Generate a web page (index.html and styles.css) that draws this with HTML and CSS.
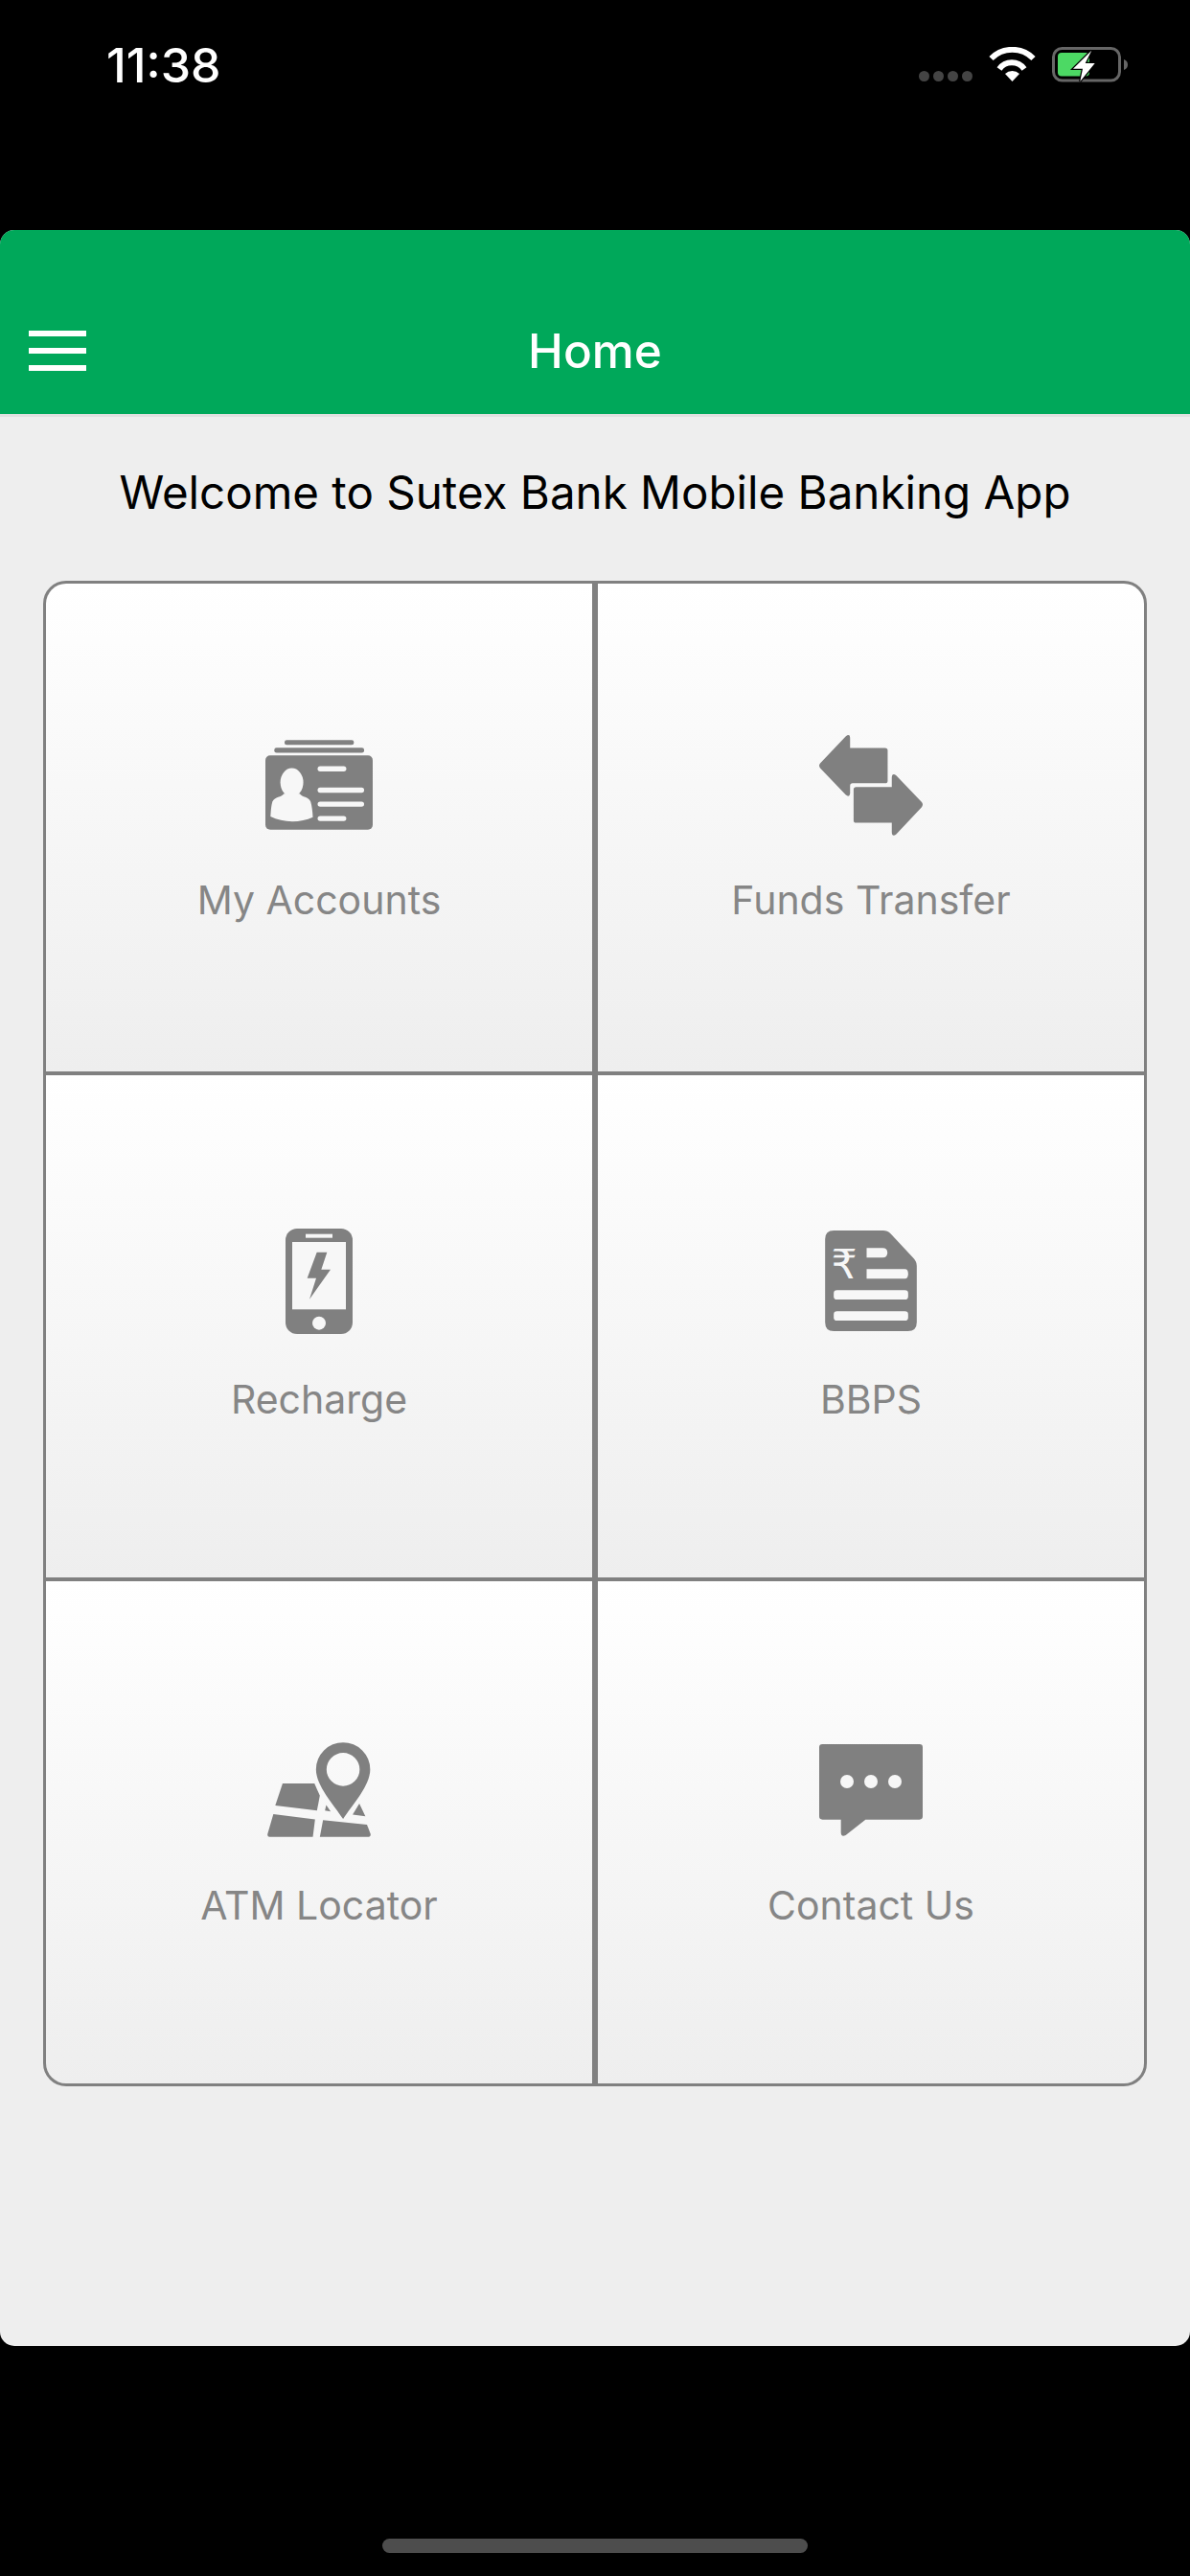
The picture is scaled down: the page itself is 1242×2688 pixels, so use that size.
FILE: index.html
```html
<!DOCTYPE html>
<html>
<head>
    <meta name="viewport" content="width=device-width, initial-scale=1">
    <title>Home</title>
    <link rel="stylesheet" href="styles.css">
</head>
<body>
    <div id="statusBar">
        <span class="time">11:38</span>
        <div class="status-icons">
            <div class="signal"><i></i><i></i><i></i><i></i></div>
            <svg class="wifi" viewBox="0 0 49 36">
                <path d="M2.5 12 A31 31 0 0 1 46.5 12" fill="none" stroke="#fff" stroke-width="6"/>
                <path d="M11 23 A16 16 0 0 1 37 23" fill="none" stroke="#fff" stroke-width="6"/>
                <path d="M24.5 36 L17 28 A11 11 0 0 1 32 28 Z" fill="#fff"/>
            </svg>
            <svg class="battery" viewBox="0 0 79 37">
                <rect x="1.5" y="1.5" width="69" height="33.5" rx="9" fill="none" stroke="#666" stroke-width="3"/>
                <rect x="6" y="6" width="33" height="24.5" rx="4" fill="#4cd964"/>
                <path d="M75 13 C78 14 79 16 79 18.5 C79 21 78 23 75 24 Z" fill="#666"/>
                <path d="M41.3 3.7 L22 22.7 H32 L29.3 36 L44.7 17 H34.7 Z" fill="#fff" stroke="#000" stroke-width="2.5" paint-order="stroke"/>
            </svg>
        </div>
    </div>

    <div id="app">
        <div class="header">
            <div class="menu-btn"><span></span><span></span><span></span></div>
            <h1>Home</h1>
        </div>

        <p class="welcome">Welcome to Sutex Bank Mobile Banking App</p>

        <div class="menu-grid">
            <div class="tile">
                <div class="tile-icon">
                    <svg class="ic-accounts" viewBox="110 92 337 281">
                        <rect x="170" y="92" width="218" height="15" rx="7" fill="#808080"/>
                        <rect x="138" y="116" width="282" height="16" rx="7" fill="#808080"/>
                        <rect x="110" y="140" width="337" height="233" rx="15" fill="#808080"/>
                        <g fill="#f7f7f7">
                            <ellipse cx="193" cy="225" rx="36" ry="45"/>
                            <path d="M168 260 C160 272 140 268 132 285 C128 298 127 315 126 332 C165 352 220 352 259 334 C258 315 256 298 252 285 C245 268 226 272 218 260 Z"/>
                            <rect x="274" y="174" width="90" height="16" rx="8"/>
                            <rect x="274" y="241" width="146" height="16" rx="8"/>
                            <rect x="274" y="285" width="146" height="16" rx="8"/>
                            <rect x="274" y="330" width="90" height="16" rx="8"/>
                        </g>
                    </svg>
                </div>
                <span class="tile-label">My Accounts</span>
            </div>
            <div class="tile">
                <div class="tile-icon">
                    <svg class="ic-transfer" viewBox="105 75 325 315">
                        <path fill="#808080" d="M108 163 L188 79 Q202 68 202 85 L202 115 L312 115 Q320 115 320 123 L320 218 Q320 226 312 226 L210 226 Q202 226 202 234 L202 258 Q200 272 188 262 L108 178 Q102 170 108 163 Z"/>
                        <path fill="#808080" d="M427 285 L347 202 Q334 192 333 208 L333 238 L221 238 Q213 238 213 246 L213 342 Q213 350 221 350 L333 350 L333 380 Q334 396 347 386 L427 301 Q433 293 427 285 Z"/>
                    </svg>
                </div>
                <span class="tile-label">Funds Transfer</span>
            </div>
            <div class="tile row-two">
                <div class="tile-icon">
                    <svg class="ic-recharge" viewBox="114 63 210 330">
                        <rect x="114" y="63" width="210" height="330" rx="36" fill="#808080"/>
                        <rect x="135" y="105" width="168" height="211" fill="#f7f7f7"/>
                        <rect x="177" y="80" width="84" height="12" fill="#f7f7f7"/>
                        <circle cx="219" cy="359" r="21" fill="#f7f7f7"/>
                        <path d="M212 137 H244 L226 191 H255 L189 284 L210 218 H182 Z" fill="#808080"/>
                    </svg>
                </div>
                <span class="tile-label">Recharge</span>
            </div>
            <div class="tile row-two">
                <div class="tile-icon">
                    <svg class="ic-bbps" viewBox="63 75 287 315">
                        <path fill="#808080" d="M90 75 H245 Q258 75 268 85 L338 160 Q350 172 350 185 V362 Q350 390 322 390 H90 Q63 390 63 362 V102 Q63 75 90 75 Z"/>
                        <g fill="#f7f7f7">
                            <text x="82" y="225" class="rupee">₹</text>
                            <path d="M193 130 H243 Q258 130 258 145 Q258 160 243 160 H193 Z"/>
                            <path d="M193 196 H313 Q323 196 323 211 Q323 226 313 226 H193 Z"/>
                            <rect x="90" y="262" width="233" height="29" rx="10"/>
                            <rect x="90" y="328" width="233" height="29" rx="10"/>
                        </g>
                    </svg>
                </div>
                <span class="tile-label">BBPS</span>
            </div>
            <div class="tile">
                <div class="tile-icon">
                    <svg class="ic-atm" viewBox="57 78 325 300">
                        <g fill="#808080">
                            <path fill-rule="evenodd" d="M295 78 A85 85 0 0 1 380 163 C380 213 325 273 295 318 C265 273 210 213 210 163 A85 85 0 0 1 295 78 Z M295 111 A52 52 0 1 0 295 215 A52 52 0 1 0 295 111 Z"/>
                            <path d="M105 207 H205 L222 245 L213 292 L82 276 Z"/>
                            <path d="M76 303 L207 320 L200 375 H64 Q56 375 58 365 Z"/>
                            <path d="M232 322 L370 336 L381 365 Q383 375 372 375 H222 Z"/>
                            <path d="M242 275 L256 295 L238 292 Z"/>
                            <path d="M346 270 L365 310 L325 305 Z"/>
                        </g>
                    </svg>
                </div>
                <span class="tile-label">ATM Locator</span>
            </div>
            <div class="tile">
                <div class="tile-icon">
                    <svg class="ic-contact" viewBox="45 90 324 288">
                        <path fill="#808080" d="M55 90 H359 Q369 90 369 100 V316 Q369 326 359 326 H190 L128 375 Q113 382 113 366 V326 H55 Q45 326 45 316 V100 Q45 90 55 90 Z"/>
                        <g fill="#f7f7f7">
                            <circle cx="132" cy="207" r="21"/>
                            <circle cx="207" cy="207" r="21"/>
                            <circle cx="282" cy="207" r="21"/>
                        </g>
                    </svg>
                </div>
                <span class="tile-label">Contact Us</span>
            </div>
        </div>
    </div>

    <div class="home-bar"><span></span></div>
</body>
</html>
```

FILE: styles.css
```css
* {
    box-sizing: border-box;
}

html, body {
    margin: 0;
    height: 100%;
}

body {
    width: 1242px;
    height: 2688px;
    background-color: #000;
    font-family: Inter, "Noto Sans", sans-serif;
    overflow: hidden;
}

#statusBar {
    height: 240px;
    padding: 44px 65px 0 111px;
    display: flex;
    justify-content: space-between;
    align-items: flex-start;
}

.time {
    color: #fff;
    font-size: 50px;
    font-weight: 500;
    line-height: 48px;
}

.status-icons {
    display: flex;
    align-items: flex-end;
    margin-top: 5px;
}

.signal {
    display: flex;
    gap: 4px;
    margin-right: 17px;
    margin-bottom: 1px;
}

.signal i {
    display: block;
    width: 11px;
    height: 11px;
    background-color: #444;
    border-radius: 50%;
}

.wifi {
    width: 49px;
    height: 36px;
    margin-right: 17px;
    margin-bottom: 1px;
}

.battery {
    width: 79px;
    height: 37px;
}

#app {
    height: 2208px;
    background-color: #eee;
    border-radius: 15px;
    overflow: hidden;
}

.header {
    height: 195px;
    padding: 60px 30px 0;
    background-color: #00a85a;
    border-bottom: 3px solid #e0e0e0;
    display: grid;
    grid-template-columns: 1fr auto 1fr;
    align-items: center;
}

.menu-btn span {
    display: block;
    width: 60px;
    height: 6px;
    background-color: #fff;
    margin-bottom: 12px;
}

.menu-btn span:last-child {
    margin-bottom: 0;
}

h1 {
    margin: 0;
    color: #fff;
    font-size: 49.5px;
    font-weight: 500;
    line-height: 58px;
}

.welcome {
    margin: 0;
    height: 171px;
    padding-top: 50px;
    text-align: center;
    color: #000;
    font-size: 47.5px;
    line-height: 58px;
}

.menu-grid {
    margin: 0 45px;
    width: 1152px;
    height: 1571px;
    border: 3px solid #808080;
    border-radius: 24px;
    background-color: #808080;
    overflow: hidden;
    display: grid;
    grid-template-columns: 570px 570px;
    grid-template-rows: 509px 524px 524px;
    column-gap: 6px;
    row-gap: 4px;
}

.tile {
    background: linear-gradient(#fff, #eee);
    display: flex;
    flex-direction: column;
    align-items: center;
    justify-content: center;
}

.tile-icon {
    height: 110px;
    display: flex;
    align-items: center;
    justify-content: center;
}

.row-two .tile-icon {
    margin-top: -3px;
    margin-bottom: 3px;
}

.tile-icon svg {
    display: block;
}

.ic-accounts { width: 112px; height: 94px; }
.ic-transfer { width: 108px; height: 105px; }
.ic-recharge { width: 70px; height: 110px; }
.ic-bbps { width: 96px; height: 105px; }
.ic-atm { width: 108px; height: 100px; }
.ic-contact { width: 108px; height: 96px; }

.rupee {
    font-family: "DejaVu Sans", sans-serif;
    font-size: 128px;
}

.tile-label {
    margin-top: 41px;
    color: #868686;
    font-size: 41px;
    line-height: 48px;
}

.home-bar {
    height: 240px;
    padding-top: 201px;
    display: flex;
    justify-content: center;
}

.home-bar span {
    display: block;
    width: 444px;
    height: 15px;
    background-color: #4d4d4d;
    border-radius: 8px;
}
```
